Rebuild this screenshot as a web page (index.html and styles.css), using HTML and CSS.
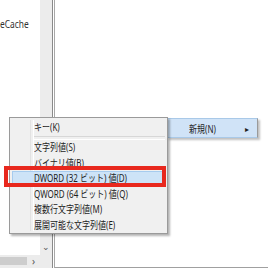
FILE: index.html
```html
<!DOCTYPE html>
<html lang="ja">
<head>
    <meta charset="UTF-8">
    <meta name="viewport" content="width=device-width, initial-scale=1.0">
    <title>レジストリ エディター</title>
    <link rel="stylesheet" href="styles.css">
</head>
<body>
    <div class="window">
        <div class="tree-pane">
            <div class="tree-main">
                <div class="tree-body">
                    <div class="tree-item"><span class="txt">eCache</span></div>
                </div>
                <div class="vscroll">
                    <span class="scroll-down">&#8964;</span>
                </div>
            </div>
            <div class="hscroll">
                <div class="hthumb"></div>
                <span class="scroll-right">&#8250;</span>
            </div>
        </div>
        <div class="splitter"></div>
        <div class="list-pane"></div>

        <!-- 親メニューの「新規」項目 -->
        <div class="parent-item">
            <span class="txt parent-label">新規(N)</span>
            <span class="submenu-arrow">&#9656;</span>
        </div>

        <!-- サブメニュー -->
        <div class="context-menu">
            <div class="menu-item"><span class="txt">キー(K)</span></div>
            <div class="menu-separator"></div>
            <div class="menu-item"><span class="txt">文字列値(S)</span></div>
            <div class="menu-item"><span class="txt">バイナリ値(B)</span></div>
            <div class="menu-item active"><span class="txt">DWORD (32 ビット) 値(D)</span></div>
            <div class="menu-item"><span class="txt">QWORD (64 ビット) 値(Q)</span></div>
            <div class="menu-item"><span class="txt">複数行文字列値(M)</span></div>
            <div class="menu-item"><span class="txt">展開可能な文字列値(E)</span></div>
        </div>

        <div class="highlight-box"></div>
    </div>
</body>
</html>
```

FILE: styles.css
```css
* {
    margin: 0;
    padding: 0;
    box-sizing: border-box;
}

body {
    font-family: 'Noto Sans', 'Noto Sans CJK JP', sans-serif;
    background: white;
    width: 268px;
    height: 268px;
    overflow: hidden;
}

/* the screenshot text is a little condensed */
.txt {
    display: inline-block;
    transform: scaleX(0.8);
    transform-origin: left center;
    white-space: nowrap;
}

.window {
    position: relative;
    display: flex;
    width: 268px;
    height: 268px;
}

.tree-pane {
    width: 52px;
    display: flex;
    flex-direction: column;
}

.tree-main {
    flex: 1;
    display: flex;
}

.tree-body {
    width: 40px;
    overflow: hidden;
    padding-top: 17px;
}

.tree-item {
    font-size: 10.5px;
    color: #333;
    white-space: nowrap;
}

.vscroll {
    width: 12px;
    background: #ececec;
    display: flex;
    align-items: flex-end;
    justify-content: center;
}

.scroll-down {
    font-size: 9px;
    color: #555;
    line-height: 1;
    margin-bottom: 4px;
}

.hscroll {
    height: 13px;
    background: #ececec;
    display: flex;
    align-items: center;
    padding-bottom: 1px;
}

.hthumb {
    width: 27px;
    height: 8px;
    background: #cdcdcd;
}

.scroll-right {
    font-size: 10px;
    color: #555;
    margin-left: 5px;
    line-height: 1;
}

.splitter {
    width: 3px;
    border-left: 1px solid #8a8a8a;
    border-right: 1px solid #a8a8a8;
    background: white;
}

.list-pane {
    flex: 1;
    border-bottom: 1px solid #a0a0a0;
}

.parent-item {
    position: absolute;
    left: 167px;
    top: 118px;
    width: 91px;
    height: 20px;
    background: #d0e3f7;
    border: 1px solid #a9c9e8;
    border-right: 1px solid #9a9a9a;
    box-shadow: 2px 2px 2px rgba(0, 0, 0, 0.25);
    display: flex;
    align-items: center;
    font-size: 10px;
    color: #1e1e1e;
}

.parent-label {
    margin-left: 21px;
}

.submenu-arrow {
    margin-left: auto;
    margin-right: 8px;
    font-size: 8px;
}

.context-menu {
    position: absolute;
    left: 9px;
    top: 117px;
    width: 159px;
    height: 117px;
    background: #f0f0f0;
    border: 1px solid #9a9a9a;
    box-shadow: 2px 2px 2px rgba(0, 0, 0, 0.3);
    padding: 2px 2px 0 2px;
}

.context-menu::before {
    content: '';
    position: absolute;
    left: 20px;
    top: 2px;
    bottom: 2px;
    width: 2px;
    border-left: 1px solid #e2e2e2;
    border-right: 1px solid white;
}

.menu-item {
    position: relative;
    height: 15.6px;
    line-height: 15.6px;
    padding-left: 22px;
    font-size: 10px;
    color: #1e1e1e;
    white-space: nowrap;
}

.menu-item.active {
    background: #cde3f7;
    border: 1px solid #a6cbee;
    line-height: 13.6px;
    padding-left: 21px;
}

.menu-separator {
    height: 4.4px;
    margin-left: 22px;
    display: flex;
    align-items: center;
}

.menu-separator::after {
    content: '';
    flex: 1;
    height: 2px;
    border-top: 1px solid #d7d7d7;
    border-bottom: 1px solid white;
}

.highlight-box {
    position: absolute;
    left: 4px;
    top: 166px;
    width: 162px;
    height: 21px;
    border: 4px solid #e8281e;
}
```
